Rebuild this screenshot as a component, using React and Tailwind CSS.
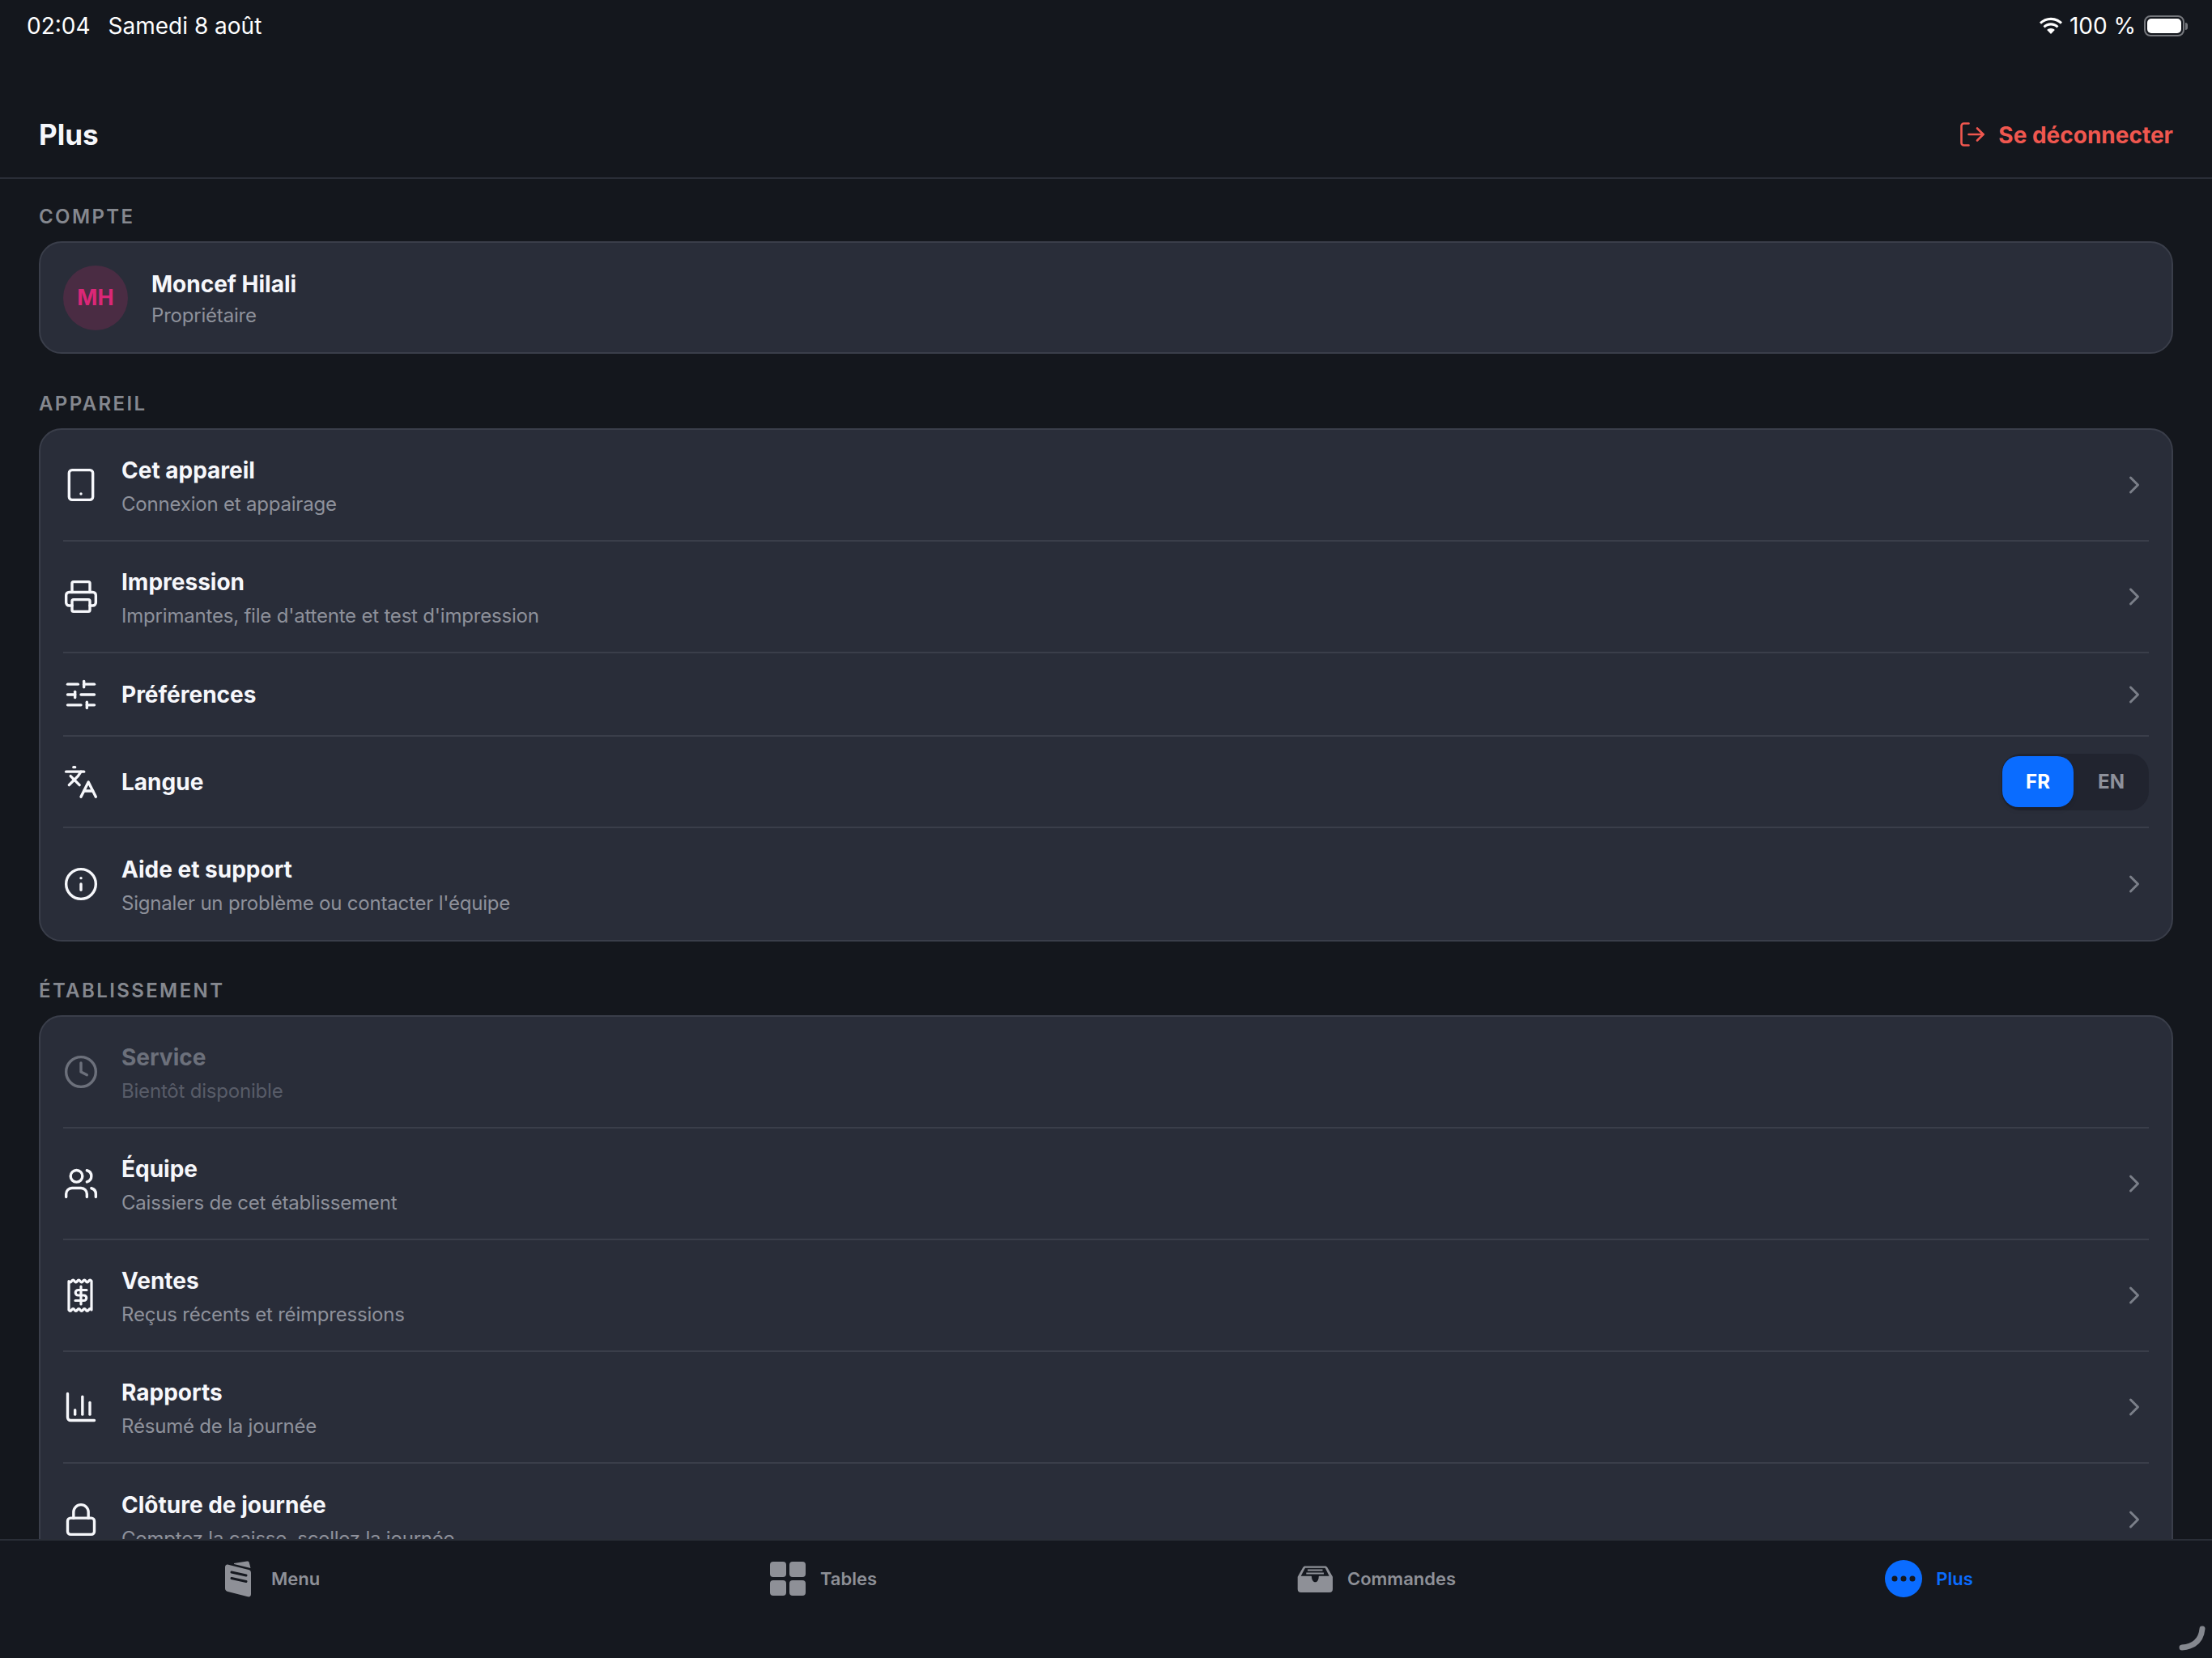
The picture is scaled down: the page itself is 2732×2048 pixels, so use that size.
import React from 'react'
import {
  ChartColumn,
  ChevronRight,
  Clock,
  Info,
  Languages,
  Lock,
  LogOut,
  Printer,
  SlidersHorizontal,
  Tablet,
  Users,
} from 'lucide-react'

const font = { fontFamily: 'Inter, "Liberation Sans", sans-serif' }

const ReceiptIcon = () => (
  <svg width="44" height="44" viewBox="0 0 44 44" fill="none" stroke="currentColor" strokeWidth="3.2" strokeLinecap="round" strokeLinejoin="round">
    <path d="M7 4.5q1.75 2.6 3.5 0t3.5 0t3.5 0t3.5 0t3.5 0t3.5 0t3.5 0t3.5 0V40q-1.75 -2.6 -3.5 0t-3.5 0t-3.5 0t-3.5 0t-3.5 0t-3.5 0t-3.5 0t-3.5 0z" />
    <path d="M29 15.5H18.5a3.25 3.25 0 0 0 0 6.5h7a3.25 3.25 0 0 1 0 6.5H15" />
    <path d="M22 11V33" />
  </svg>
)

const MenuTabIcon = () => (
  <svg width="34" height="45" viewBox="0 0 34 45">
    <path d="M11 3 27 .5c1.500-.2 2.500.5 2.800 1.800L31.500 9 11 4z" fill="#8e9097" />
    <path d="M0 8c0-2.500 1.500-3.800 4-3.300L29 11c2 .5 3 1.800 3 3.800V41c0 2.500-1.500 3.800-4 3.300L3.500 38C1.300 37.500 0 36 0 34V8z" fill="#8e9097" />
    <path d="M8 14 26 18M8 21.500 26 25.500" stroke="#15181f" strokeWidth="3" strokeLinecap="round" />
  </svg>
)

const TablesTabIcon = () => (
  <svg width="48" height="48" viewBox="0 0 48 48" fill="#8e9097">
    <rect x="2" y="3" width="20" height="19" rx="4" />
    <rect x="26" y="3" width="20" height="19" rx="4" />
    <rect x="2" y="26" width="20" height="19" rx="4" />
    <rect x="26" y="26" width="20" height="19" rx="4" />
  </svg>
)

const OrdersTabIcon = () => (
  <svg width="48" height="48" viewBox="0 0 48 48">
    <path d="M12 8.500h24.500c1.300 0 2.200.5 2.800 1.600L46 21.700V37c0 2.500-1.500 4-4 4H6.700c-2.500 0-4-1.500-4-4V21.700L9.300 10.100C9.900 9 10.700 8.500 12 8.500z" fill="#8e9097" />
    <path d="M12 10.700h24.700l5 10H29.500c-.5 0-.8.400-.8.800 0 3.800-1.600 6.800-4.200 6.800s-4.500-3-4.500-6.800c0-.4-.3-.8-.8-.8H6.700z" fill="#15181f" />
    <path d="M15 13.500h18.500M13.300 17.500h21.700" stroke="#8e9097" strokeWidth="2.200" />
  </svg>
)

const MoreTabIcon = () => (
  <svg width="48" height="48" viewBox="0 0 48 48">
    <circle cx="24" cy="24" r="23" fill="#0a6cff" />
    <circle cx="13" cy="24" r="3.500" fill="#15181f" />
    <circle cx="24" cy="24" r="3.500" fill="#15181f" />
    <circle cx="35" cy="24" r="3.500" fill="#15181f" />
  </svg>
)

const WifiIcon = () => (
  <svg width="30" height="22" viewBox="0 0 30 22" fill="#fff">
    <path d="M15 4c4.600 0 8.900 1.800 12 4.800l2-2.200C25.300 3 20.400.800 15 .800S4.700 3 1 6.600l2 2.200C6.100 5.800 10.400 4 15 4z" />
    <path d="M15 10.500c2.900 0 5.500 1.100 7.500 3l2-2.200C21.900 8.800 18.600 7.300 15 7.300s-6.900 1.500-9.500 4l2 2.200c2-1.900 4.600-3 7.500-3z" />
    <path d="M15 14c-1.900 0-3.500.7-4.800 1.900L15 21l4.800-5.100C18.500 14.700 16.900 14 15 14z" />
  </svg>
)

const Battery = () => (
  <div className="flex items-center">
    <div className="flex h-[26px] w-[50px] rounded-[8px] border-2 border-[#76787d] p-[2px]">
      <div className="flex-1 rounded-[5px] bg-white" />
    </div>
    <div className="ml-[1px] h-[9px] w-[3px] rounded-r-full bg-[#76787d]" />
  </div>
)

const Row = ({ icon: Icon, custom, title, sub, height = 'h-[138px]', last, disabled, right }) => (
  <div className={`flex items-center ${height} ${last ? '' : 'border-b-2 border-[#3a3e4a]'}`}>
    <div className={`flex w-[72px] shrink-0 items-center ${disabled ? 'text-[#6c707b]' : 'text-[#f6f7fb]'}`}>
      {custom || <Icon size={44} strokeWidth={1.85} />}
    </div>
    <div className="flex flex-1 flex-col">
      <div className={`text-[28px] leading-[40px] font-bold ${sub ? 'pt-[2px]' : ''} ${disabled ? 'text-[#6c707b]' : 'text-[#f6f7fb]'}`}>{title}</div>
      {sub && <div className={`mt-[5px] text-[24px] leading-[34px] tracking-[-0.2px] ${disabled ? 'text-[#585c68]' : 'text-[#8e919b]'}`}>{sub}</div>}
    </div>
    {right || (!disabled && <ChevronRight size={36} strokeWidth={2} className="text-[#7b7f89]" />)}
  </div>
)

const Section = ({ label, className, children }) => (
  <section className={className}>
    <div className="mb-[14px] text-[24px] leading-[32px] font-semibold tracking-[2.4px] text-[#85888f]">{label}</div>
    <div className="rounded-[28px] border-2 border-[#3a3e4a] bg-[#292d39] px-[28px]">{children}</div>
  </section>
)

const LangSwitch = () => (
  <div className="flex h-[70px] w-[182px] items-center rounded-[24px] bg-[#21242f] pl-[1px] text-[24px] font-bold">
    <div className="flex h-[63px] w-[88px] items-center justify-center rounded-[20px] bg-[#0a6cff] text-white shadow-md">FR</div>
    <div className="flex-1 text-center text-[#8e919b]">EN</div>
  </div>
)

const Tab = ({ icon, label, active }) => (
  <div className="flex flex-1 justify-center pr-[17px]">
    <div className="flex h-[48px] items-center gap-4">
      <div className="flex w-[48px] justify-center">{icon}</div>
      <span className={`text-[22px] font-semibold ${active ? 'text-[#0a6cff]' : 'text-[#8e9097]'}`}>{label}</span>
    </div>
  </div>
)

export default function App() {
  return (
    <div className="relative flex h-[2048px] w-[2732px] flex-col overflow-hidden bg-[#14171d]" style={font}>
      {/* status bar */}
      <div className="flex h-[64px] items-center justify-between pr-[30px] pl-[33px] text-[28px] text-white">
        <div className="flex gap-[22px]">
          <span>02:04</span>
          <span>Samedi 8 août</span>
        </div>
        <div className="flex items-center">
          <WifiIcon />
          <span className="mr-[10px] ml-[8px]">100 %</span>
          <Battery />
        </div>
      </div>

      {/* header */}
      <header className="flex h-[157px] shrink-0 items-center justify-between border-b-2 border-[#2a2e37] px-[48px] pt-[49px]">
        <h1 className="text-[35px] font-bold text-[#f6f7fb]">Plus</h1>
        <button className="flex items-center gap-[14px] text-[28px] font-bold text-[#f0574f]">
          <LogOut size={36} strokeWidth={1.75} />
          <span className="pt-[2px]">Se déconnecter</span>
        </button>
      </header>

      <main className="min-h-0 flex-1 overflow-hidden px-[48px] pt-[31px]">
        <Section label="COMPTE">
          <div className="flex h-[135px] items-center gap-[29px]">
            <div className="flex h-[80px] w-[80px] items-center justify-center rounded-full bg-[#4a2c43] pt-[2px] text-[27px] font-bold text-[#db2777]">MH</div>
            <div className="flex flex-col pt-[3px]">
              <div className="text-[28px] leading-[40px] font-bold text-[#f6f7fb]">Moncef Hilali</div>
              <div className="mt-[2px] text-[24px] leading-[34px] tracking-[-0.2px] text-[#8e919b]">Propriétaire</div>
            </div>
          </div>
        </Section>

        <Section label="APPAREIL" className="mt-[46px]">
          <Row icon={Tablet} title="Cet appareil" sub="Connexion et appairage" />
          <Row icon={Printer} title="Impression" sub="Imprimantes, file d'attente et test d'impression" />
          <Row icon={SlidersHorizontal} title="Préférences" height="h-[103px]" />
          <Row icon={Languages} title="Langue" height="h-[113px]" right={<LangSwitch />} />
          <Row icon={Info} title="Aide et support" sub="Signaler un problème ou contacter l'équipe" last />
        </Section>

        <Section label="ÉTABLISSEMENT" className="mt-[45px]">
          <Row icon={Clock} title="Service" sub="Bientôt disponible" disabled />
          <Row icon={Users} title="Équipe" sub="Caissiers de cet établissement" />
          <Row custom={<ReceiptIcon />} title="Ventes" sub="Reçus récents et réimpressions" />
          <Row icon={ChartColumn} title="Rapports" sub="Résumé de la journée" />
          <Row icon={Lock} title="Clôture de journée" sub="Comptez la caisse, scellez la journée" last />
        </Section>
      </main>

      {/* tab bar */}
      <nav className="z-10 flex h-[147px] shrink-0 border-t-2 border-[#2a2e37] bg-[#15181f] pt-[23px]">
        <Tab icon={<MenuTabIcon />} label="Menu" />
        <Tab icon={<TablesTabIcon />} label="Tables" />
        <Tab icon={<OrdersTabIcon />} label="Commandes" />
        <Tab icon={<MoreTabIcon />} label="Plus" active />
      </nav>

      {/* corner gesture mark */}
      <svg className="absolute right-[2px] bottom-[2px] z-20" width="40" height="40" viewBox="0 0 40 40" fill="none">
        <path d="M30 6Q28 27 5 29" stroke="#85888f" strokeWidth="7" strokeLinecap="round" />
      </svg>
    </div>
  )
}
